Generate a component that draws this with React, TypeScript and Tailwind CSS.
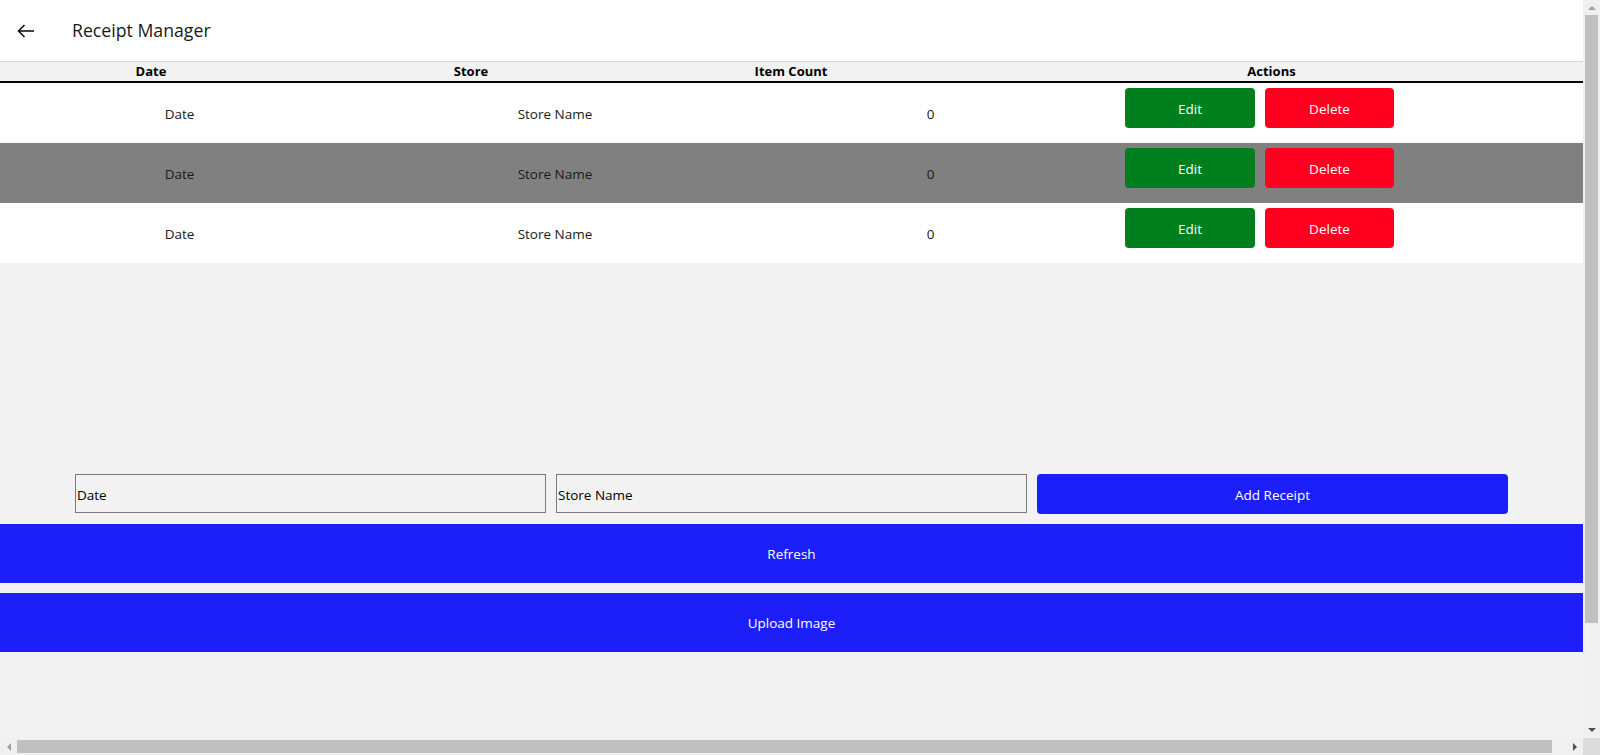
import React from 'react';

const receipts = [
  { date: 'Date', store: 'Store Name', count: 0 },
  { date: 'Date', store: 'Store Name', count: 0 },
  { date: 'Date', store: 'Store Name', count: 0 },
];

function BackArrow() {
  return (
    <svg width="18" height="14" viewBox="0 0 18 14" fill="none" stroke="#111" strokeWidth="1.6">
      <path d="M17 7H1.5" />
      <path d="M7.5 1L1.5 7l6 6" />
    </svg>
  );
}

function ReceiptRow({ date, store, count, shaded }: { date: string; store: string; count: number; shaded: boolean }) {
  return (
    <div className={`grid grid-cols-[359px_392px_359px_1fr] h-[60px] text-[13.5px] text-[#1a1a1a] ${shaded ? 'bg-[#808080]' : 'bg-white'}`}>
      <div className="flex items-center justify-center pt-[2px]">{date}</div>
      <div className="flex items-center justify-center pt-[2px]">{store}</div>
      <div className="flex items-center justify-center pt-[2px]">{count}</div>
      <div className="flex items-start gap-[10px] pl-[15px] pt-[5px]">
        <button className="w-[130px] h-[40px] pt-[2px] rounded-[4px] bg-[#007f1f] text-white text-[13.5px]">Edit</button>
        <button className="w-[129px] h-[40px] pt-[2px] rounded-[4px] bg-[#ff0020] text-white text-[13.5px]">Delete</button>
      </div>
    </div>
  );
}

export default function App() {
  return (
    <div className="w-[1600px] h-[755px] flex flex-col bg-[#f2f2f2] overflow-hidden" style={{ fontFamily: '"Open Sans", "Noto Sans", sans-serif' }}>
      <div className="flex flex-1 min-h-0">
        {/* main content */}
        <div className="w-[1583px] flex flex-col">
          <div className="h-[62px] bg-white border-b border-[#d9d9d9] flex items-center shrink-0">
            <div className="w-[72px] pl-[17px] pt-[1px] flex items-center">
              <BackArrow />
            </div>
            <span className="text-[17.7px] text-[#1a1a1a]">Receipt Manager</span>
          </div>

          <div className="grid grid-cols-[302px_338px_302px_1fr] h-[21px] bg-[#f2f2f2] border-b-2 border-black text-[13px] font-bold text-black leading-[19px] shrink-0">
            <div className="text-center">Date</div>
            <div className="text-center">Store</div>
            <div className="text-center">Item Count</div>
            <div className="text-center pl-[18px]">Actions</div>
          </div>

          {receipts.map((r, i) => (
            <ReceiptRow key={i} date={r.date} store={r.store} count={r.count} shaded={i === 1} />
          ))}

          <div className="mt-[211px] px-[75px] grid grid-cols-3 gap-[10px] h-[39px]">
            <input
              placeholder="Date"
              className="h-[39px] border border-[#7a7a7a] bg-transparent px-[1px] pt-[2px] text-[13.5px] placeholder:text-black outline-none"
            />
            <input
              placeholder="Store Name"
              className="h-[39px] border border-[#7a7a7a] bg-transparent px-[1px] pt-[2px] text-[13.5px] placeholder:text-black outline-none"
            />
            <button className="h-[40px] pt-[2px] rounded-[4px] bg-[#1c1ff8] text-white text-[13.5px]">Add Receipt</button>
          </div>

          <button className="mt-[11px] h-[59px] pt-[2px] w-full bg-[#1c1ff8] text-white text-[13.5px]">Refresh</button>
          <button className="mt-[10px] h-[59px] pt-[2px] w-full bg-[#1c1ff8] text-white text-[13.5px]">Upload Image</button>
        </div>

        {/* vertical scrollbar */}
        <div className="w-[17px] bg-[#f0f0f0] flex flex-col items-center">
          <div className="h-[15px] flex items-center justify-center pt-[1px]">
            <div className="w-0 h-0 border-l-[4px] border-r-[4px] border-b-[4px] border-l-transparent border-r-transparent border-b-[#a0a0a0]" />
          </div>
          <div className="w-[13px] h-[608px] bg-[#c0c0c0]" />
          <div className="flex-1" />
          <div className="h-[17px] flex items-center justify-center">
            <div className="w-0 h-0 border-l-[4px] border-r-[4px] border-t-[4px] border-l-transparent border-r-transparent border-t-[#505050]" />
          </div>
        </div>
      </div>

      {/* horizontal scrollbar */}
      <div className="h-[17px] flex shrink-0">
        <div className="w-[1583px] bg-[#f0f0f0] flex items-center">
          <div className="w-[17px] flex items-center justify-center">
            <div className="w-0 h-0 border-t-[4px] border-b-[4px] border-r-[4px] border-t-transparent border-b-transparent border-r-[#a0a0a0]" />
          </div>
          <div className="w-[1535px] h-[13px] bg-[#c0c0c0]" />
          <div className="flex-1" />
          <div className="w-[17px] flex items-center justify-center pl-[1px]">
            <div className="w-0 h-0 border-t-[4px] border-b-[4px] border-l-[4px] border-t-transparent border-b-transparent border-l-[#505050]" />
          </div>
        </div>
        <div className="w-[17px] bg-[#dcdcdc]" />
      </div>
    </div>
  );
}
